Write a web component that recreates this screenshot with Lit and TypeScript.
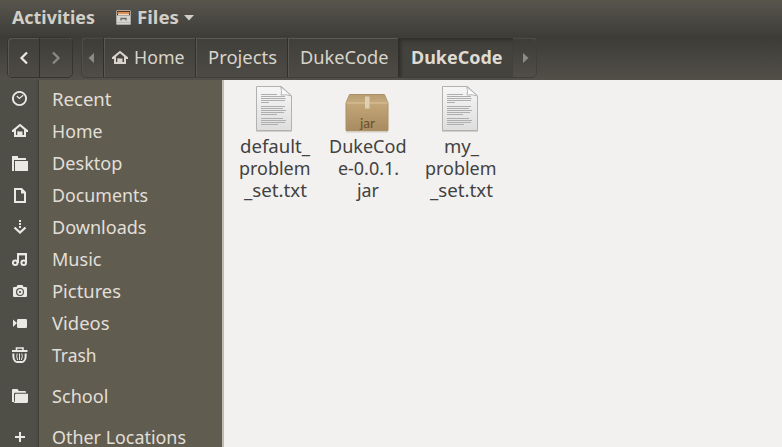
import { LitElement, html, css, svg, TemplateResult } from "lit";
import { customElement, property } from "lit/decorators.js";

/** One line of text, fitted to a set advance width. */
@customElement("fit-label")
class FitLabel extends LitElement {
  @property() text = "";
  @property({ type: Number }) width = 50;
  static styles = css`
    :host { display: block; flex: none; }
    svg { display: block; height: 22px; overflow: visible; }
    text { fill: currentColor; }
  `;
  render() {
    return html`<svg width=${this.width}>
      <text x="0" y="17" textLength=${this.width} lengthAdjust="spacingAndGlyphs">${this.text}</text>
    </svg>`;
  }
}

const home = svg`<path d="M8 .8 0 7.3V9h2v5h12V9h2V7.3zM8 3.300 12 6.700V12h-1.500V8.500h-5V12H4V6.700z" fill-rule="evenodd"/><path d="M5.500 8.500h1.700V12H5.500z"/>`;
const icons: Record<string, TemplateResult> = {
  recent: svg`<circle cx="7.5" cy="7.5" r="6.6" fill="none" stroke="currentColor" stroke-width="1.900"/><path d="M4.800 5 7.300 7.400 11.200 4.300" fill="none" stroke="currentColor" stroke-width="1.300"/>`,
  home,
  desktop: svg`<path d="M0 16V1h6v2h8v2H2v11z"/><path d="M3 6h13v10H3z"/>`,
  documents: svg`<path d="M3 2h6.500L13 5.500V15H3z" fill="none" stroke="currentColor" stroke-width="2"/><path d="M9 1.500v5h5L9 1.500z"/>`,
  downloads: svg`<path d="M7 1h2v2H7zM7 4h2v2H7zM7 7h2v2H7z"/><path d="M2.500 8.500 8 13.500l5.500-5" fill="none" stroke="currentColor" stroke-width="2.300"/>`,
  music: svg`<g fill="none" stroke="currentColor" stroke-width="2"><circle cx="3.200" cy="11.700" r="2.300"/><circle cx="11.700" cy="11.700" r="2.300"/><path d="M6 12V2.500M14 12V2.500"/></g><path d="M5 2h10v2.400H5z"/>`,
  pictures: svg`<path fill-rule="evenodd" d="M1 5q0-1 1-1h2.500l1-2h5l1 2H14q1 0 1 1v8q0 1-1 1H2q-1 0-1-1zM8 5a4 4 0 1 0 0 8 4 4 0 0 0 0-8z"/><circle cx="8" cy="9" r="2" fill="none" stroke="currentColor" stroke-width="1.800"/>`,
  videos: svg`<path d="M1 4.500 5 8l-4 4z"/><rect x="5" y="4" width="10" height="9" rx="1.200"/>`,
  trash: svg`<g fill="none" stroke="currentColor"><path d="M4.500 3V1h6.500v2" stroke-width="1.600"/><path d="M0 4h15.500" stroke-width="2"/><path d="M1.500 6.500Q.8 12 3 14q.8 1 2 1h5q1.200 0 2-1 2.200-2 1.500-7.500" stroke-width="2"/><path d="M5.200 6.500q-1.200 3 .4 6.500M7.500 6.500v6.500M9.800 6.500q1.200 3-.4 6.500" stroke-width="1"/></g>`,
  school: svg`<path d="M0 14V2q0-1 1-1h4.500l1.300 2H13q1 0 1 1v.7H3L2 5.600V14z"/><path d="M3 7q0-1.300 1.200-1.300H16V13.500q0 1.500-1.500 1.500H1.400Q3 14.500 3 12z"/>`,
  plus: svg`<path d="M7 3h2v4h4v2H9v4H7V9H3V7h4z"/>`,
};

const places: [string, string, number][] = [
  ["recent", "Recent", 59.5], ["home", "Home", 50.5], ["desktop", "Desktop", 70.5],
  ["documents", "Documents", 96], ["downloads", "Downloads", 94.5], ["music", "Music", 49.5],
  ["pictures", "Pictures", 69], ["videos", "Videos", 57.5], ["trash", "Trash", 44.5],
  ["school", "School", 56.5], ["plus", "Other Locations", 134],
];

const sheet = html`<svg width="48" height="48" viewBox="0 0 48 48">
  <defs><linearGradient id="p" x1="0" y1="0" x2="0" y2="1"><stop offset="0" stop-color="#f7f7f7"/><stop offset="1" stop-color="#dedede"/></linearGradient></defs>
  <path d="M6 46.5h36" stroke="#cfcecc"/>
  <path d="M6.500 1.500h25L41.500 11v34.500h-35z" fill="url(#p)" stroke="#b1b1b0"/>
  <path d="M11 9.500h16M11 11.500h24M11 13.500h24.500M11 15.500h24M11 17.500h8M11 21.500h24M11 23.500h22M11 25.500h25M11 27.500h23M11 29.500h16M11 33.500h22M11 35.500h25M11 37.500h24M11 39.500h17" stroke="#aeaeae" stroke-width="1"/>
  <path d="M30.500 1.500q2 4 .5 8.500 5-1 10.500 1z" fill="#fdfdfd" stroke="#b4b4b4"/>
</svg>`;

const box = html`<svg width="48" height="48" viewBox="0 0 48 48">
  <defs>
    <linearGradient id="b" x1="0" y1="0" x2="0" y2="1"><stop offset="0" stop-color="#cbb082"/><stop offset="1" stop-color="#a88b5e"/></linearGradient>
    <linearGradient id="t" x1="0" y1="0" x2="0" y2="1"><stop offset="0" stop-color="#b89c72"/><stop offset="1" stop-color="#c6aa7e"/></linearGradient>
  </defs>
  <path d="M3 46.500h42" stroke="#d2cbbf" stroke-width="2"/>
  <path d="M6.500 9.500h35L45 18v27.500H3V18z" fill="url(#b)" stroke="#aa9068"/>
  <path d="M7 10h34l3.500 7.500h-41z" fill="url(#t)"/>
  <path d="M3.500 18h41" stroke="#dcc59e"/>
  <path d="M22 11.500h4.500v12H22z" fill="#dfcfb3"/>
  <text x="17" y="43" class="jar" textLength="15" lengthAdjust="spacingAndGlyphs">jar</text>
</svg>`;

const files: { art: TemplateResult; lines: [string, number][] }[] = [
  { art: sheet, lines: [["default_", 70], ["problem", 71.5], ["_set.txt", 63]] },
  { art: box, lines: [["DukeCod", 77.5], ["e-0.0.1.", 61], ["jar", 22]] },
  { art: sheet, lines: [["my_", 35], ["problem", 71.5], ["_set.txt", 63]] },
];

@customElement("app-root")
class AppRoot extends LitElement {
  static styles = css`
    :host { display: flex; flex-direction: column; width: 782px; height: 447px; overflow: hidden;
      font: 17.5px "Noto Sans", "Open Sans", sans-serif; color: #d8d4cb; background: #f2f1ef; }
    * { box-sizing: border-box; }
    svg { display: block; flex: none; fill: currentColor; }
    .panel { height: 36px; flex: none; display: flex; align-items: flex-start; padding: 7px 0 0 12px;
      font-weight: 700; color: #d2cfc8; background: linear-gradient(#58554d, #3e3d38); }
    .cabinet { margin: 3px 6px 0 21px; }
    .caret { margin: 8px 0 0 5px; }
    .tools { height: 44px; flex: none; display: flex; gap: 8px; padding: 1px 0 0 7px;
      background: linear-gradient(#3c3b37, #524f48); }
    .group { display: flex; height: 41px; border: 1px solid #35342f; border-radius: 5px;
      box-shadow: inset 0 1px #57554e, inset 1px 0 #504e48; }
    .group.dim { border-color: #403f3a; }
    .cell { display: flex; align-items: center; justify-content: center; border-left: 1px solid #302f2b;
      box-shadow: inset 1px 1px #5a5851; background: linear-gradient(#403f3a, #4d4a44); }
    .cell:first-child { border-left: 0; }
    .cell.off { background: none; box-shadow: inset 0 1px #4b4943; color: #8e8b83; }
    .back { width: 31px; border-radius: 4px 0 0 4px; color: #eeeae3; }
    .fwd { width: 33px; }
    .left { width: 21px; padding-right: 3px; }
    .right { width: 23px; border: 0; padding-left: 3px; }
    .home { width: 92px; gap: 6px; padding-right: 2px; }
    .projects { width: 92px; padding-left: 2px; }
    .duke { width: 111px; padding-left: 2px; }
    .current { width: 115px; padding-left: 2px; font-weight: 700; color: #dfdbd2;
      background: linear-gradient(#3d3c37, #44423d 30%, #45433e); box-shadow: inset 2px 2px 3px #302f2b; }
    .main { display: flex; flex: 1; min-height: 0; }
    .side { width: 224px; flex: none; overflow: hidden; padding-top: 3px; border-right: 2px solid #bebbb4;
      background: linear-gradient(90deg, #4f4e47 0 36px, #4b4a43 36px 38px, #424139 38px 39px, #605d50 39px); }
    .place { display: flex; height: 32px; align-items: center; padding-left: 12px; gap: 23.500px; color: #e2dfd8; }
    .place > svg { color: #ebe9e4; }
    .place fit-label { margin-top: 2px; }
    .place.apart { margin-top: 9px; }
    .grid { display: flex; gap: 0; padding: 5px 0 0 3px; color: #424242; }
    .file { width: 93px; display: flex; flex-direction: column; align-items: center; }
    .name { display: flex; flex-direction: column; align-items: center; margin-top: 3px; padding-left: 3px; }
    .jar { font: 14px "Lato", sans-serif; fill: #66512f; }
  `;

  label(text: string, width: number) {
    return html`<fit-label .text=${text} .width=${width}></fit-label>`;
  }

  render() {
    return html`
      <div class="panel">
        ${this.label("Activities", 83)}
        <svg class="cabinet" width="15" height="15" viewBox="0 0 15 15">
          <rect x="0" y="0" width="15" height="15" rx="1.500" fill="#a9a7a3"/>
          <path d="M1 1h13v4H1z" fill="#543522"/><path d="M1.500 2h12v1.500h-12z" fill="#ef8a3d"/><path d="M2 3.500h11V5H2z" fill="#f4d5b5"/>
          <path d="M1 6h13v8H1z" fill="#d6d5d2"/><path d="M5 10.500v-2h5v2" fill="none" stroke="#6a6966" stroke-width="1.300"/><path d="M1 12.500h13" stroke="#bbb9b5"/>
        </svg>
        ${this.label("Files", 42)}
        <svg class="caret" width="10" height="6"><path d="M0 0h10L5 5.500z"/></svg>
      </div>
      <div class="tools">
        <div class="group">
          <div class="cell back"><svg width="10" height="14"><path d="M8 1.500 2.500 7 8 12.500" fill="none" stroke="currentColor" stroke-width="2.200"/></svg></div>
          <div class="cell off fwd"><svg width="10" height="14"><path d="M2 1.500 7.500 7 2 12.500" fill="none" stroke="currentColor" stroke-width="2.200"/></svg></div>
        </div>
        <div class="group dim">
          <div class="cell off left"><svg width="6" height="10"><path d="M6 0v10L.5 5z"/></svg></div>
          <div class="cell home"><svg width="16" height="16">${home}</svg>${this.label("Home", 50.5)}</div>
          <div class="cell projects">${this.label("Projects", 69)}</div>
          <div class="cell duke">${this.label("DukeCode", 88.500)}</div>
          <div class="cell current">${this.label("DukeCode", 91.500)}</div>
          <div class="cell off right"><svg width="6" height="10"><path d="M0 0v10l5.500-5z"/></svg></div>
        </div>
      </div>
      <div class="main">
        <div class="side">
          ${places.map(([icon, text, width]) => html`
            <div class="place ${icon === "school" || icon === "plus" ? "apart" : ""}">
              <svg width="16" height="16">${icons[icon]}</svg>${this.label(text, width)}
            </div>`)}
        </div>
        <div class="grid">
          ${files.map((f) => html`
            <div class="file">${f.art}
              <div class="name">${f.lines.map(([t, w]) => this.label(t, w))}</div>
            </div>`)}
        </div>
      </div>`;
  }
}
